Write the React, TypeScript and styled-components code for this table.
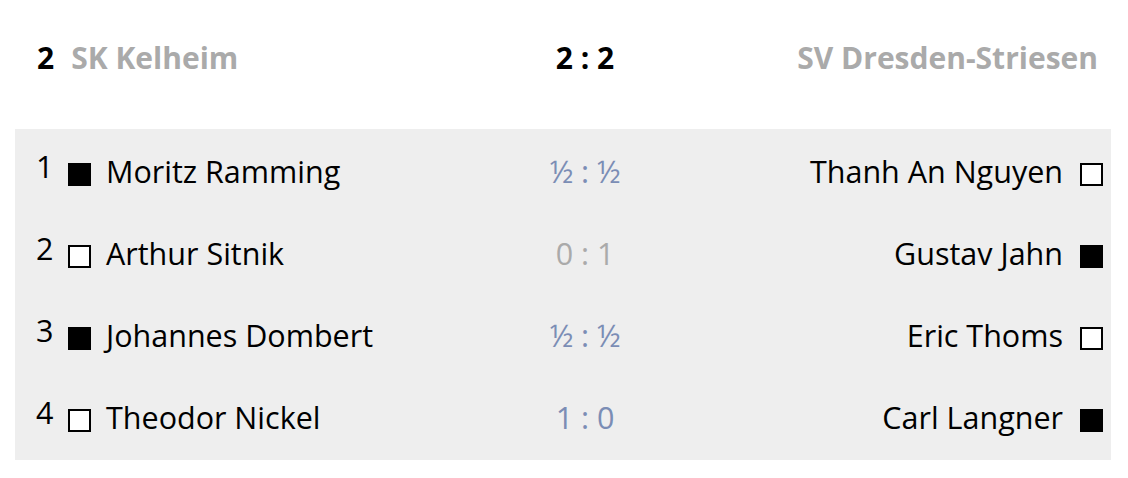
import React from "react";
import styled, { createGlobalStyle } from "styled-components";

const GlobalStyle = createGlobalStyle`
  body {
    margin: 0;
    background: #fff;
    font-family: "Open Sans", "Noto Sans", sans-serif;
    color: #000;
  }
`;

const Wrapper = styled.div`
  padding: 0 17px 0 15px;
`;

const Header = styled.div`
  display: grid;
  grid-template-columns: 480px 180px 1fr;
  align-items: center;
  height: 114px;
  padding: 0 13px 0 22px;
  font-size: 30px;
  font-weight: 700;

  .home {
    display: flex;
    align-items: center;
    gap: 17px;
  }

  .team {
    color: #aaa;
  }

  .total {
    text-align: center;
    margin-left: -44px;
  }

  .away {
    text-align: right;
  }
`;

const Panel = styled.div`
  margin-top: 15px;
  background: #eee;
  padding: 4px 8px 0 21px;
  height: 331px;
  box-sizing: border-box;
`;

const Row = styled.div`
  display: grid;
  grid-template-columns: 459px 180px 1fr;
  align-items: center;
  height: 82px;
  font-size: 30.5px;
`;

const Side = styled.div<{ $right?: boolean }>`
  display: flex;
  align-items: center;
  justify-content: ${(p) => (p.$right ? "flex-end" : "flex-start")};
  gap: ${(p) => (p.$right ? "17px" : "15px")};
`;

const Board = styled.span`
  width: 17px;
  margin-bottom: 16px;
`;

const Piece = styled.span<{ $black: boolean }>`
  display: inline-block;
  width: 23px;
  height: 23px;
  box-sizing: border-box;
  border: 2px solid #000;
  background: ${(p) => (p.$black ? "#000" : "#fff")};
  margin-top: 1px;
`;

const Score = styled.div<{ $draw: boolean }>`
  text-align: center;
  margin-bottom: 6px;
  color: ${(p) => (p.$draw ? "#7b8db5" : "#aaa")};
`;

const Name = styled.span`
  white-space: nowrap;
  margin-bottom: 6px;
`;

type Game = {
  home: string;
  away: string;
  homeBlack: boolean;
  result: string;
  blue: boolean;
};

const games: Game[] = [
  { home: "Moritz Ramming", away: "Thanh An Nguyen", homeBlack: true, result: "½ : ½", blue: true },
  { home: "Arthur Sitnik", away: "Gustav Jahn", homeBlack: false, result: "0 : 1", blue: false },
  { home: "Johannes Dombert", away: "Eric Thoms", homeBlack: true, result: "½ : ½", blue: true },
  { home: "Theodor Nickel", away: "Carl Langner", homeBlack: false, result: "1 : 0", blue: true },
];

export default function App() {
  return (
    <Wrapper>
      <GlobalStyle />
      <Header>
        <div className="home">
          <span>2</span>
          <span className="team">SK Kelheim</span>
        </div>
        <div className="total">2 : 2</div>
        <div className="away team">SV Dresden-Striesen</div>
      </Header>
      <Panel>
        {games.map((g, i) => (
          <Row key={g.home}>
            <Side>
              <Board>{i + 1}</Board>
              <Piece $black={g.homeBlack} />
              <Name>{g.home}</Name>
            </Side>
            <Score $draw={g.blue}>{g.result}</Score>
            <Side $right>
              <Name>{g.away}</Name>
              <Piece $black={!g.homeBlack} />
            </Side>
          </Row>
        ))}
      </Panel>
    </Wrapper>
  );
}
